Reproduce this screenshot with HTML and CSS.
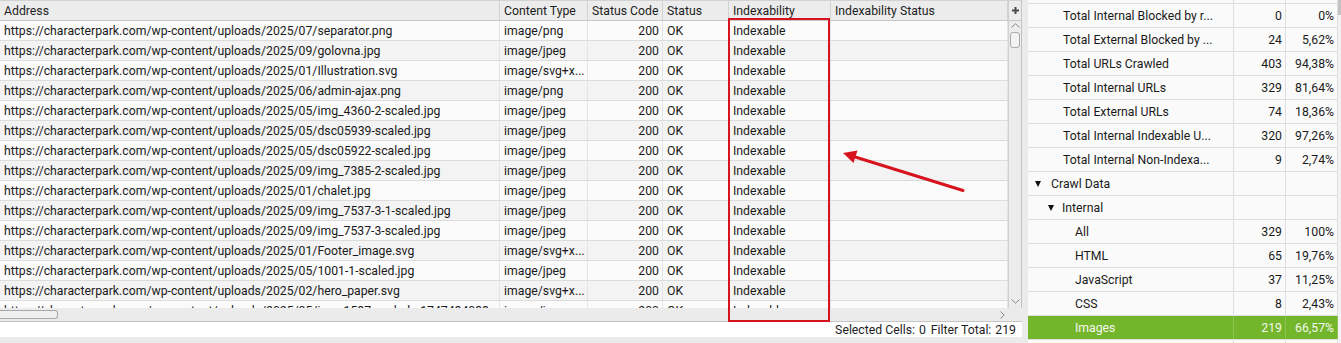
FILE: index.html
```html
<!DOCTYPE html>
<html>
<head>
<meta charset="utf-8">
<link rel="stylesheet" href="styles.css">
</head>
<body>
<div class="app">
  <div class="left">
    <div class="grid-area">
      <div class="grid">
        <div class="hdr">
          <div>Address</div><div>Content Type</div><div>Status Code</div><div>Status</div><div>Indexability</div><div>Indexability Status</div>
        </div>
        <div class="row"><span>https://characterpark.com/wp-content/uploads/2025/07/separator.png</span><span>image/png</span><span class="num">200</span><span>OK</span><span>Indexable</span><span></span></div>
        <div class="row"><span>https://characterpark.com/wp-content/uploads/2025/09/golovna.jpg</span><span>image/jpeg</span><span class="num">200</span><span>OK</span><span>Indexable</span><span></span></div>
        <div class="row"><span>https://characterpark.com/wp-content/uploads/2025/01/Illustration.svg</span><span>image/svg+x...</span><span class="num">200</span><span>OK</span><span>Indexable</span><span></span></div>
        <div class="row"><span>https://characterpark.com/wp-content/uploads/2025/06/admin-ajax.png</span><span>image/png</span><span class="num">200</span><span>OK</span><span>Indexable</span><span></span></div>
        <div class="row"><span>https://characterpark.com/wp-content/uploads/2025/05/img_4360-2-scaled.jpg</span><span>image/jpeg</span><span class="num">200</span><span>OK</span><span>Indexable</span><span></span></div>
        <div class="row"><span>https://characterpark.com/wp-content/uploads/2025/05/dsc05939-scaled.jpg</span><span>image/jpeg</span><span class="num">200</span><span>OK</span><span>Indexable</span><span></span></div>
        <div class="row"><span>https://characterpark.com/wp-content/uploads/2025/05/dsc05922-scaled.jpg</span><span>image/jpeg</span><span class="num">200</span><span>OK</span><span>Indexable</span><span></span></div>
        <div class="row"><span>https://characterpark.com/wp-content/uploads/2025/09/img_7385-2-scaled.jpg</span><span>image/jpeg</span><span class="num">200</span><span>OK</span><span>Indexable</span><span></span></div>
        <div class="row"><span>https://characterpark.com/wp-content/uploads/2025/01/chalet.jpg</span><span>image/jpeg</span><span class="num">200</span><span>OK</span><span>Indexable</span><span></span></div>
        <div class="row"><span>https://characterpark.com/wp-content/uploads/2025/09/img_7537-3-1-scaled.jpg</span><span>image/jpeg</span><span class="num">200</span><span>OK</span><span>Indexable</span><span></span></div>
        <div class="row"><span>https://characterpark.com/wp-content/uploads/2025/09/img_7537-3-scaled.jpg</span><span>image/jpeg</span><span class="num">200</span><span>OK</span><span>Indexable</span><span></span></div>
        <div class="row"><span>https://characterpark.com/wp-content/uploads/2025/01/Footer_image.svg</span><span>image/svg+x...</span><span class="num">200</span><span>OK</span><span>Indexable</span><span></span></div>
        <div class="row"><span>https://characterpark.com/wp-content/uploads/2025/05/1001-1-scaled.jpg</span><span>image/jpeg</span><span class="num">200</span><span>OK</span><span>Indexable</span><span></span></div>
        <div class="row"><span>https://characterpark.com/wp-content/uploads/2025/02/hero_paper.svg</span><span>image/svg+x...</span><span class="num">200</span><span>OK</span><span>Indexable</span><span></span></div>
        <div class="row"><span>https://characterpark.com/wp-content/uploads/2025/05/img_1587-scaled-e1747484038...</span><span>image/jpeg</span><span class="num">200</span><span>OK</span><span>Indexable</span><span></span></div>
      </div>
      <div class="vscroll">
        <div class="vs-head">
          <svg width="7" height="7" viewBox="0 0 7 7"><rect x="2.5" y="0" width="2" height="7" fill="#4a4a4a"/><rect x="0" y="2.5" width="7" height="2" fill="#4a4a4a"/></svg>
        </div>
        <div class="vs-track">
          <svg class="chev-up" width="9" height="5" viewBox="0 0 9 5"><polyline points="0.5,4.5 4.5,0.8 8.5,4.5" fill="none" stroke="#8a8a8a" stroke-width="1"/></svg>
          <div class="vs-thumb"></div>
          <div class="vs-fill"></div>
          <svg class="chev-down" width="9" height="5" viewBox="0 0 9 5"><polyline points="0.5,0.5 4.5,4.2 8.5,0.5" fill="none" stroke="#8a8a8a" stroke-width="1"/></svg>
        </div>
      </div>
    </div>
    <div class="hscroll">
      <div class="hs-thumb"></div>
      <div class="hs-fill"></div>
      <svg class="chev-right" width="5" height="8" viewBox="0 0 5 8"><polyline points="0.5,0.5 4.2,4 0.5,7.5" fill="none" stroke="#8a8a8a" stroke-width="1"/></svg>
      <div class="hs-corner"></div>
    </div>
    <div class="status">
      <span class="st-label">Selected Cells:</span><span class="st-val">0</span><span class="st-label">Filter Total:</span><span class="st-val">219</span>
    </div>
  </div>
  <div class="gap"></div>
  <div class="right">
    <div class="rlist">
      <div class="rrow"><span class="nm"></span><span class="nv"></span><span class="pv"></span></div>
      <div class="rrow"><span class="nm l1">Total Internal Blocked by r...</span><span class="nv">0</span><span class="pv">0%</span></div>
      <div class="rrow"><span class="nm l1">Total External Blocked by ...</span><span class="nv">24</span><span class="pv">5,62%</span></div>
      <div class="rrow"><span class="nm l1">Total URLs Crawled</span><span class="nv">403</span><span class="pv">94,38%</span></div>
      <div class="rrow"><span class="nm l1">Total Internal URLs</span><span class="nv">329</span><span class="pv">81,64%</span></div>
      <div class="rrow"><span class="nm l1">Total External URLs</span><span class="nv">74</span><span class="pv">18,36%</span></div>
      <div class="rrow"><span class="nm l1">Total Internal Indexable U...</span><span class="nv">320</span><span class="pv">97,26%</span></div>
      <div class="rrow"><span class="nm l1">Total Internal Non-Indexa...</span><span class="nv">9</span><span class="pv">2,74%</span></div>
      <div class="rrow"><span class="nm l0"><i class="tri"></i>Crawl Data</span><span class="nv"></span><span class="pv"></span></div>
      <div class="rrow"><span class="nm lt"><i class="tri"></i>Internal</span><span class="nv"></span><span class="pv"></span></div>
      <div class="rrow"><span class="nm l2">All</span><span class="nv">329</span><span class="pv">100%</span></div>
      <div class="rrow"><span class="nm l2">HTML</span><span class="nv">65</span><span class="pv">19,76%</span></div>
      <div class="rrow"><span class="nm l2">JavaScript</span><span class="nv">37</span><span class="pv">11,25%</span></div>
      <div class="rrow"><span class="nm l2">CSS</span><span class="nv">8</span><span class="pv">2,43%</span></div>
      <div class="rrow sel"><span class="nm l2">Images</span><span class="nv">219</span><span class="pv">66,57%</span></div>
      <div class="rrow"><span class="nm l2"></span><span class="nv"></span><span class="pv"></span></div>
    </div>
  </div>
  <div class="rscroll"><div class="rthumb"></div></div>

  <div class="highlight"></div>
  <svg class="arrow" width="1341" height="343" viewBox="0 0 1341 343">
    <line x1="963" y1="190.5" x2="852" y2="156" stroke="#d7141d" stroke-width="3" stroke-linecap="round"/>
    <polygon points="843,153 857.5,150.5 853.5,163" fill="#d7141d"/>
  </svg>
</div>
</body>
</html>
```

FILE: styles.css
```css
html, body {
  margin: 0;
  padding: 0;
}
body {
  font-family: Roboto, "Liberation Sans", sans-serif;
  font-size: 12.25px;
  color: #1a1a1a;
  background: #ebebeb;
}
.app {
  position: relative;
  width: 1341px;
  height: 343px;
  overflow: hidden;
  display: flex;
  background: #ebebeb;
}

/* ---------- left grid ---------- */
.left {
  width: 1022px;
  display: flex;
  flex-direction: column;
}
.grid-area {
  height: 308px;
  display: flex;
  overflow: hidden;
  box-sizing: border-box;
  border-right: 1px solid #c4c4c4;
}
.grid {
  width: 1008px;
  flex: none;
  overflow: hidden;
  background: #fafafa;
}
.hdr, .row {
  display: grid;
  grid-template-columns: 500px 88px 75px 66px 102px 177px;
  box-sizing: border-box;
}
.hdr {
  height: 21px;
  background: #ececec;
  border-top: 1px solid #d3d3d3;
  border-bottom: 1px solid #c8c8c8;
  color: #1e1e1e;
}
.hdr div {
  border-right: 1px solid #d2d2d2;
  padding: 2px 0 0 4px;
  line-height: 17px;
  white-space: nowrap;
  overflow: hidden;
}
.row {
  height: 20px;
  border-bottom: 1px solid #dcdcdc;
  background: #fbfbfb;
}
.row:nth-child(odd) {
  background: #f3f3f3;
}
.row span {
  border-right: 1px solid #e4e4e4;
  padding: 2px 4px 0 4px;
  line-height: 17px;
  white-space: nowrap;
  overflow: hidden;
}
.row span.num {
  text-align: right;
  padding-right: 3px;
}

.vscroll {
  width: 13px;
  flex: none;
  display: flex;
  flex-direction: column;
  box-sizing: border-box;
  border-left: 1px solid #d0d0d0;
  background: #ececec;
}
.vs-head {
  height: 21px;
  box-sizing: border-box;
  border-top: 1px solid #d3d3d3;
  border-bottom: 1px solid #c8c8c8;
  display: flex;
  align-items: center;
  justify-content: center;
}
.vs-track {
  flex: 1;
  display: flex;
  flex-direction: column;
  align-items: center;
}
.chev-up {
  margin-top: 2px;
  flex: none;
}
.vs-thumb {
  margin-top: 4px;
  width: 10px;
  height: 16px;
  box-sizing: border-box;
  border: 1px solid #a8a8a8;
  border-radius: 3px;
  background: #f3f3f3;
  flex: none;
}
.vs-fill {
  flex: 1;
}
.chev-down {
  margin-bottom: 4px;
  flex: none;
}

.hscroll {
  height: 13px;
  display: flex;
  align-items: center;
  background: #ebebeb;
}
.hs-thumb {
  width: 58px;
  height: 9px;
  box-sizing: border-box;
  border: 1px solid #a8a8a8;
  border-left: none;
  border-radius: 0 3px 3px 0;
  background: #efefef;
  flex: none;
}
.hs-fill {
  flex: 1;
}
.chev-right {
  flex: none;
  margin-top: 1px;
}
.hs-corner {
  width: 17px;
  flex: none;
}

.status {
  height: 16px;
  box-sizing: border-box;
  border-top: 1px solid #c6c6c6;
  background: #ffffff;
  display: flex;
  justify-content: flex-end;
  align-items: center;
  padding: 1px 6px 0 0;
  color: #1e1e1e;
}
.st-label {
  margin-right: 4px;
}
.st-val {
  margin-right: 5px;
}
.st-val:last-child {
  margin-right: 0;
}

/* ---------- right panel ---------- */
.gap {
  width: 6px;
  flex: none;
}
.right {
  width: 310px;
  flex: none;
  overflow: hidden;
  background: #fafafa;
}
.rlist {
  margin-top: -21px;
}
.rrow {
  display: grid;
  grid-template-columns: 206px 52px 52px;
  height: 24px;
  box-sizing: border-box;
  border-top: 1px solid #dedede;
}
.rrow span {
  border-right: 1px solid #dedede;
  padding-top: 2px;
  line-height: 21px;
  white-space: nowrap;
  overflow: hidden;
}
.rrow .nv, .rrow .pv {
  text-align: right;
  padding-right: 3px;
}
.l1 { padding-left: 35px; }
.l0 { padding-left: 7px; }
.lt { padding-left: 20px; }
.l2 { padding-left: 47px; }
.tri {
  display: inline-block;
  width: 0;
  height: 0;
  border-left: 3.5px solid transparent;
  border-right: 3.5px solid transparent;
  border-top: 6px solid #111111;
  vertical-align: 1px;
  margin-right: 10px;
}
.lt .tri {
  margin-right: 8px;
}
.rrow.sel {
  background: #73b52b;
  color: #f4f8ee;
}
.rrow.sel span {
  border-right-color: #8cc253;
}
.rscroll {
  width: 3px;
  flex: none;
  background: #f2f2f2;
}
.rthumb {
  height: 15px;
  background: #c3c3c3;
}

/* ---------- annotations ---------- */
.highlight {
  position: absolute;
  left: 728px;
  top: 18px;
  width: 102px;
  height: 304px;
  box-sizing: border-box;
  border: 2.5px solid #d7141d;
  pointer-events: none;
}
.arrow {
  position: absolute;
  left: 0;
  top: 0;
  pointer-events: none;
}
```
